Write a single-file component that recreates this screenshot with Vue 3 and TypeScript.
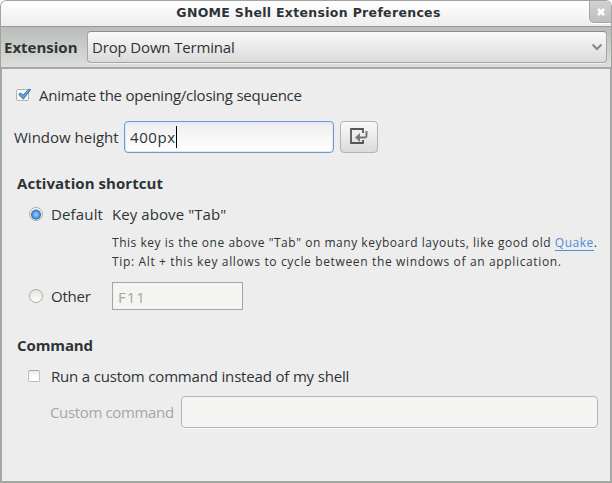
<script setup lang="ts">
import { ref } from 'vue'

const extension = ref('Drop Down Terminal')
const animate = ref(true)
const height = ref('400px')
const shortcut = ref<'default' | 'other'>('default')
const customCommand = ref(false)
</script>

<template>
  <div class="window">
    <header class="titlebar">
      <span class="title">GNOME Shell Extension Preferences</span>
      <button class="close" aria-label="Close">
        <svg width="8" height="8" viewBox="0 0 8 8"><path d="M1 1L7 7M7 1L1 7" stroke="#fff" stroke-width="2.6" /></svg>
      </button>
    </header>

    <div class="toolbar">
      <span class="t-ext">Extension</span>
      <div class="combo">
        <span class="t-combo">{{ extension }}</span>
        <svg width="12" height="8" viewBox="0 0 12 8"><path d="M1.5 1.5L6 6L10.500 1.500" fill="none" stroke="#858784" stroke-width="2" /></svg>
      </div>
    </div>

    <main class="body">
      <div class="row animate">
        <svg class="check" width="17" height="14" viewBox="0 0 17 14" @click="animate = !animate">
          <rect x="0.500" y="1.500" width="12" height="11" rx="1.500" fill="#f8f8f4" stroke="#b4b5a9" />
          <path v-if="animate" d="M2.700 6.200L4.700 5L7 7.300L12.500 1.300L14.600 1.600L7.300 11.200Z" fill="#65a0e2" stroke="#3a70b4" stroke-width="1" stroke-linejoin="round" />
        </svg>
        <span class="t-animate">Animate the opening/closing sequence</span>
      </div>

      <div class="row height">
        <span class="t-height">Window height</span>
        <div class="entry focused"><span class="t-value">{{ height }}</span><i class="caret"></i></div>
        <button class="reset" aria-label="Reset height">
          <svg width="20" height="18" viewBox="0 0 20 18">
            <path d="M14 6V2H2V16H14V13" fill="none" stroke="#555753" stroke-width="1.800" />
            <path d="M17.500 4V8.500Q17.500 10.500 15.500 10.500H9" fill="none" stroke="#777975" stroke-width="2" />
            <path d="M6 10.500L11 6V15Z" fill="#777975" />
          </svg>
        </button>
      </div>

      <h2 class="head-shortcut"><span class="t-act">Activation shortcut</span></h2>

      <div class="row default">
        <i class="radio" :class="{ on: shortcut === 'default' }" @click="shortcut = 'default'"></i>
        <span class="choice t-default">Default</span>
        <span class="t-key">Key above "Tab"</span>
      </div>
      <div class="hint">
        <div><span class="t-hint1">This key is the one above "Tab" on many keyboard layouts, like good old <a>Quake</a>.</span></div>
        <div><span class="t-hint2">Tip: Alt + this key allows to cycle between the windows of an application.</span></div>
      </div>
      <div class="row other">
        <i class="radio" :class="{ on: shortcut === 'other' }" @click="shortcut = 'other'"></i>
        <span class="choice t-other">Other</span>
        <div class="key-entry"><span class="t-f">F11</span></div>
      </div>

      <h2 class="head-command"><span class="t-cmd">Command</span></h2>

      <div class="row run">
        <i class="box" @click="customCommand = !customCommand"></i>
        <span class="t-run">Run a custom command instead of my shell</span>
      </div>
      <div class="row custom">
        <span class="t-custom">Custom command</span>
        <div class="entry disabled"></div>
      </div>
    </main>
  </div>
</template>

<style>
body { background: #fff; }
</style>

<style scoped>
* { box-sizing: border-box; }
.window {
  width: 612px; height: 483px; overflow: hidden;
  display: flex; flex-direction: column;
  border-radius: 6px 6px 0 0;
  background: #ededed;
  font: 15px/20px "Open Sans", "Noto Sans", sans-serif;
  color: #2e3436;
  white-space: nowrap;
}
.titlebar {
  position: relative; height: 27px; flex: none;
  display: flex; justify-content: center;
  padding-top: 3px;
  border: 1px solid #a1a3a1; border-bottom-color: #989a98;
  border-radius: 6px 6px 0 0;
  background: linear-gradient(#fff, #ededed);
}
.title { font: bold 12.5px/18px "DejaVu Sans", sans-serif; margin-left: 5px; letter-spacing: 0.31px; }
.close {
  position: absolute; right: 0; top: 0; width: 22px; height: 22px; padding: 0;
  display: flex; align-items: center; justify-content: center;
  border: 1px solid #a5a7a5; border-top: 0; border-right: 0;
  border-radius: 0 5px 0 5px;
  background: linear-gradient(#d2d2d2, #bcbebc);
  box-shadow: 0 1px #fff;
}
.toolbar {
  height: 42px; flex: none; display: flex;
  padding: 4px 4px 0 3px;
  border: 1px solid #a1a3a1; border-top: 0; border-bottom: 2px solid #a6a8a6;
  background: linear-gradient(#babcba, #dcdedc);
}
.t-ext { font-weight: bold; line-height: 33px; width: 83px; flex: none; }
.t-combo { letter-spacing: -0.16px; }
.combo {
  flex: 1; height: 32px; display: flex; align-items: center; justify-content: space-between;
  padding: 0 3px 0 4px;
  border: 1px solid #a3a5a3; border-top-color: #8c8e8c; border-radius: 4px;
  background: linear-gradient(#fafafa, #dadada);
  box-shadow: 0 1px #eeefee;
}
.body {
  flex: 1; padding: 16px 12px 0;
  border: 2px solid #a6a8a6; border-top: 0;
  background: #ededed;
}
.row { display: flex; align-items: center; }
.animate { height: 20px; padding-left: 2px; }
.check { margin-right: 6px; margin-bottom: 1px; }
.t-animate { letter-spacing: -0.23px; }
.height { height: 32px; margin-top: 16px; }
.t-height { width: 110px; flex: none; }
.entry { height: 32px; border-radius: 4px; display: flex; align-items: center; }
.focused {
  width: 210px; padding-left: 5px;
  border: 1px solid #6c9bd2;
  background: linear-gradient(#e5eaf0, #f0f0f0 3px, #fff);
  box-shadow: inset 0 0 0 1px #dce8f5;
}
.t-value { letter-spacing: 0.6px; }
.caret { width: 1px; height: 22px; background: #000; }
.reset {
  width: 38px; height: 32px; margin-left: 6px; padding: 0 0 2px;
  display: flex; align-items: center; justify-content: center;
  border: 1px solid #b2b3b2; border-radius: 4px;
  background: linear-gradient(#fafafa, #dadada);
}
h2 { margin: 0; padding-left: 3px; font-size: 15px; line-height: 20px; }
.head-shortcut { margin-top: 20px; }
.t-act { letter-spacing: 0.06px; }
.default { height: 20px; margin-top: 11px; padding-left: 15px; }
.radio {
  width: 14px; height: 14px; flex: none; margin-right: 8px; margin-bottom: 1px;
  border: 1px solid #aaaca3; border-radius: 50%;
  background: linear-gradient(#e4e4df, #fff);
}
.radio.on {
  background: radial-gradient(circle at 50% 55%, #a4d0ff 0, #599ce9 3px, #3772b5 4.5px, #f4f4f0 5.5px);
}
.choice { width: 61px; flex: none; }
.t-default { letter-spacing: 0.15px; }
.t-key { letter-spacing: 0.08px; }
.hint { padding-left: 98px; margin-top: 9px; font-size: 12px; line-height: 19px; }
.t-hint1 { letter-spacing: 0.53px; }
.t-hint2 { letter-spacing: 0.645px; }
.hint a { color: #4a90d9; border-bottom: 1px solid #4a90d9; display: inline-block; line-height: 14px; }
.other { height: 28px; margin-top: 11px; padding-left: 15px; }
.t-other { letter-spacing: -0.2px; }
.key-entry {
  width: 131px; height: 28px; padding: 2px 0 0 5px;
  display: flex; align-items: center;
  border: 1px solid #a4a6a4; background: #f4f4f2; color: #a5a7a5;
}
.t-f { letter-spacing: 1px; }
.head-command { margin-top: 25px; }
.t-cmd { letter-spacing: -0.1px; }
.run { height: 20px; margin-top: 11px; padding-left: 14px; }
.box {
  width: 12px; height: 12px; flex: none; margin: 0 11px 1px 0;
  border: 1px solid #bdbeb5; border-top-color: #a3a597; border-radius: 2px;
  background: linear-gradient(#ececea, #fff 60%);
}
.t-run { letter-spacing: -0.17px; }
.custom { height: 32px; margin-top: 10px; padding-left: 36px; }
.t-custom { width: 131px; flex: none; color: #a5a7a5; letter-spacing: -0.35px; }
.disabled { width: 417px; border: 1px solid #b2b4b0; background: #f4f4f2; box-shadow: 0 1px #fafafa; }
</style>
